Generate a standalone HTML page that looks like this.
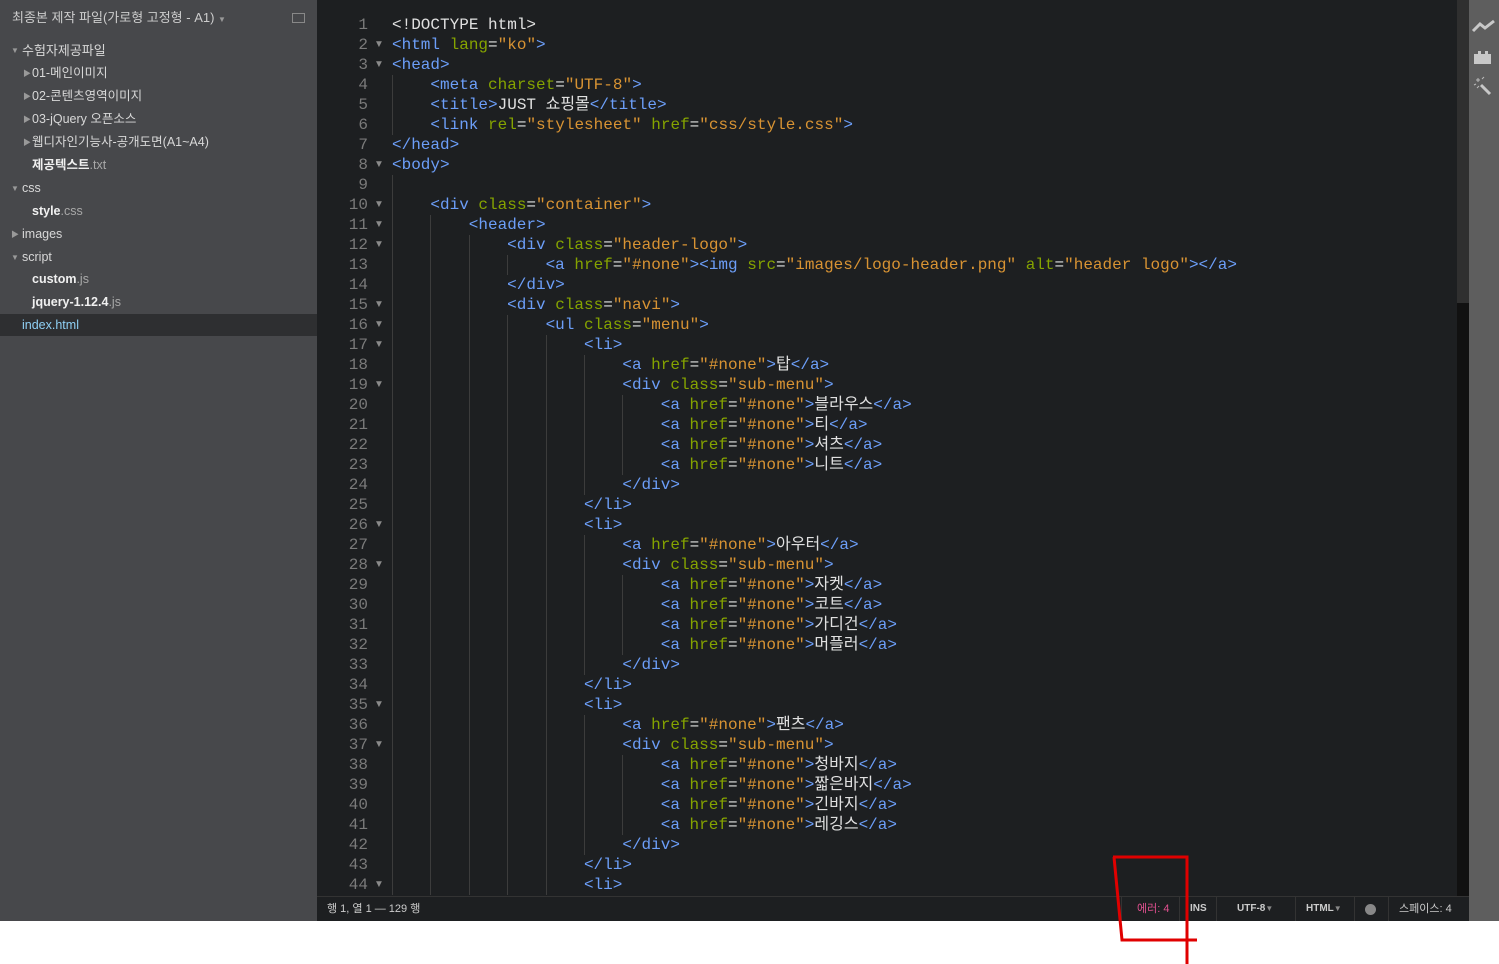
<!DOCTYPE html>
<html><head><meta charset="utf-8"><style>
*{margin:0;padding:0;box-sizing:border-box}
body{width:1499px;height:964px;background:#fff;position:relative;overflow:hidden;font-family:"Liberation Sans","Noto Sans CJK KR",sans-serif}
#side{position:absolute;left:0;top:0;width:317px;height:921px;background:#47484b;color:#d8d8d8;font-size:12.5px}
#side .r{position:absolute;left:0;width:317px;height:23px;line-height:23px;white-space:nowrap}
#side .ar{position:absolute;font-size:8px;color:#999}
#side b{color:#f0f0f0}
#side .ext{color:#a8a8a8}
#ed{position:absolute;left:317px;top:0;width:1140px;height:896px;background:#1d1f21;overflow:hidden}
#nums{position:absolute;left:0;top:15px;width:51px;text-align:right;color:#7a7a7a;font:16px/20px "Liberation Mono",monospace}
#folds{position:absolute;left:57px;top:15px;color:#8a8a8a;font:10px/20px "Liberation Sans",sans-serif}
#code{position:absolute;left:75px;top:15px;font:16px/20px "Liberation Mono","Noto Sans CJK KR",monospace;color:#e0e0e0}
#code div{height:20px;white-space:pre}
#code i{display:inline-block;width:38.4px;height:20px;border-left:1px solid #3c3c3c;vertical-align:top}
.t{color:#6c9ef8}.a{color:#85a300}.s{color:#d89333}
#sb1{position:absolute;left:1457px;top:0;width:12px;height:303px;background:#2f2f2f}
#sb2{position:absolute;left:1457px;top:303px;width:12px;height:593px;background:#111}
#tb{position:absolute;left:1469px;top:0;width:30px;height:921px;background:#5e5e5e}
#st{position:absolute;left:317px;top:896px;width:1152px;height:25px;background:#1d1f21;border-top:1px solid #333;color:#ccc;font-size:11px;line-height:24px}
#st span{position:absolute;top:0}
.sep{position:absolute;top:0;width:1px;height:24px;background:#333}
</style></head><body>
<div id="side">
<div class="r" style="top:6px;left:12px;font-size:13px;color:#ccc">최종본 제작 파일(가로형 고정형 - A1) <span style="font-size:8px;color:#999">▼</span></div>
<div style="position:absolute;left:292px;top:13px;width:13px;height:10px;border:1px solid #888"></div>
<div class="r" style="top:39px"><span class="ar" style="left:11px">▼</span><span style="position:absolute;left:22px;font-size:13px">수험자제공파일</span></div>
<div class="r" style="top:62px"><span class="ar" style="left:23px">▶</span><span style="position:absolute;left:32px">01-메인이미지</span></div>
<div class="r" style="top:85px"><span class="ar" style="left:23px">▶</span><span style="position:absolute;left:32px">02-콘텐츠영역이미지</span></div>
<div class="r" style="top:108px"><span class="ar" style="left:23px">▶</span><span style="position:absolute;left:32px">03-jQuery 오픈소스</span></div>
<div class="r" style="top:131px"><span class="ar" style="left:23px">▶</span><span style="position:absolute;left:32px">웹디자인기능사-공개도면(A1~A4)</span></div>
<div class="r" style="top:154px"><span style="position:absolute;left:32px"><b>제공텍스트</b><span class="ext">.txt</span></span></div>
<div class="r" style="top:177px"><span class="ar" style="left:11px">▼</span><span style="position:absolute;left:22px">css</span></div>
<div class="r" style="top:200px"><span style="position:absolute;left:32px"><b>style</b><span class="ext">.css</span></span></div>
<div class="r" style="top:223px"><span class="ar" style="left:11px">▶</span><span style="position:absolute;left:22px">images</span></div>
<div class="r" style="top:246px"><span class="ar" style="left:11px">▼</span><span style="position:absolute;left:22px">script</span></div>
<div class="r" style="top:268px"><span style="position:absolute;left:32px"><b>custom</b><span class="ext">.js</span></span></div>
<div class="r" style="top:291px"><span style="position:absolute;left:32px"><b>jquery-1.12.4</b><span class="ext">.js</span></span></div>
<div class="r" style="top:314px;height:22px;line-height:22px;background:#2e2f31"><span style="position:absolute;left:22px;color:#8fd0f5">index.html</span></div>
</div>
<div id="ed">
<div id="nums">1<br>2<br>3<br>4<br>5<br>6<br>7<br>8<br>9<br>10<br>11<br>12<br>13<br>14<br>15<br>16<br>17<br>18<br>19<br>20<br>21<br>22<br>23<br>24<br>25<br>26<br>27<br>28<br>29<br>30<br>31<br>32<br>33<br>34<br>35<br>36<br>37<br>38<br>39<br>40<br>41<br>42<br>43<br>44</div>
<div id="folds"><br>▼<br>▼<br><br><br><br><br>▼<br><br>▼<br>▼<br>▼<br><br><br>▼<br>▼<br>▼<br><br>▼<br><br><br><br><br><br><br>▼<br><br>▼<br><br><br><br><br><br><br>▼<br><br>▼<br><br><br><br><br><br><br>▼</div>
<div id="code">
<div>&lt;!DOCTYPE html&gt;</div>
<div><span class="t">&lt;html</span> <span class="a">lang</span>=<span class="s">"ko"</span><span class="t">&gt;</span></div>
<div><span class="t">&lt;head&gt;</span></div>
<div><i></i><span class="t">&lt;meta</span> <span class="a">charset</span>=<span class="s">"UTF-8"</span><span class="t">&gt;</span></div>
<div><i></i><span class="t">&lt;title&gt;</span>JUST 쇼핑몰<span class="t">&lt;/title&gt;</span></div>
<div><i></i><span class="t">&lt;link</span> <span class="a">rel</span>=<span class="s">"stylesheet"</span> <span class="a">href</span>=<span class="s">"css/style.css"</span><span class="t">&gt;</span></div>
<div><span class="t">&lt;/head&gt;</span></div>
<div><span class="t">&lt;body&gt;</span></div>
<div><i></i></div>
<div><i></i><span class="t">&lt;div</span> <span class="a">class</span>=<span class="s">"container"</span><span class="t">&gt;</span></div>
<div><i></i><i></i><span class="t">&lt;header&gt;</span></div>
<div><i></i><i></i><i></i><span class="t">&lt;div</span> <span class="a">class</span>=<span class="s">"header-logo"</span><span class="t">&gt;</span></div>
<div><i></i><i></i><i></i><i></i><span class="t">&lt;a</span> <span class="a">href</span>=<span class="s">"#none"</span><span class="t">&gt;&lt;img</span> <span class="a">src</span>=<span class="s">"images/logo-header.png"</span> <span class="a">alt</span>=<span class="s">"header logo"</span><span class="t">&gt;&lt;/a&gt;</span></div>
<div><i></i><i></i><i></i><span class="t">&lt;/div&gt;</span></div>
<div><i></i><i></i><i></i><span class="t">&lt;div</span> <span class="a">class</span>=<span class="s">"navi"</span><span class="t">&gt;</span></div>
<div><i></i><i></i><i></i><i></i><span class="t">&lt;ul</span> <span class="a">class</span>=<span class="s">"menu"</span><span class="t">&gt;</span></div>
<div><i></i><i></i><i></i><i></i><i></i><span class="t">&lt;li&gt;</span></div>
<div><i></i><i></i><i></i><i></i><i></i><i></i><span class="t">&lt;a</span> <span class="a">href</span>=<span class="s">"#none"</span><span class="t">&gt;</span>탑<span class="t">&lt;/a&gt;</span></div>
<div><i></i><i></i><i></i><i></i><i></i><i></i><span class="t">&lt;div</span> <span class="a">class</span>=<span class="s">"sub-menu"</span><span class="t">&gt;</span></div>
<div><i></i><i></i><i></i><i></i><i></i><i></i><i></i><span class="t">&lt;a</span> <span class="a">href</span>=<span class="s">"#none"</span><span class="t">&gt;</span>블라우스<span class="t">&lt;/a&gt;</span></div>
<div><i></i><i></i><i></i><i></i><i></i><i></i><i></i><span class="t">&lt;a</span> <span class="a">href</span>=<span class="s">"#none"</span><span class="t">&gt;</span>티<span class="t">&lt;/a&gt;</span></div>
<div><i></i><i></i><i></i><i></i><i></i><i></i><i></i><span class="t">&lt;a</span> <span class="a">href</span>=<span class="s">"#none"</span><span class="t">&gt;</span>셔츠<span class="t">&lt;/a&gt;</span></div>
<div><i></i><i></i><i></i><i></i><i></i><i></i><i></i><span class="t">&lt;a</span> <span class="a">href</span>=<span class="s">"#none"</span><span class="t">&gt;</span>니트<span class="t">&lt;/a&gt;</span></div>
<div><i></i><i></i><i></i><i></i><i></i><i></i><span class="t">&lt;/div&gt;</span></div>
<div><i></i><i></i><i></i><i></i><i></i><span class="t">&lt;/li&gt;</span></div>
<div><i></i><i></i><i></i><i></i><i></i><span class="t">&lt;li&gt;</span></div>
<div><i></i><i></i><i></i><i></i><i></i><i></i><span class="t">&lt;a</span> <span class="a">href</span>=<span class="s">"#none"</span><span class="t">&gt;</span>아우터<span class="t">&lt;/a&gt;</span></div>
<div><i></i><i></i><i></i><i></i><i></i><i></i><span class="t">&lt;div</span> <span class="a">class</span>=<span class="s">"sub-menu"</span><span class="t">&gt;</span></div>
<div><i></i><i></i><i></i><i></i><i></i><i></i><i></i><span class="t">&lt;a</span> <span class="a">href</span>=<span class="s">"#none"</span><span class="t">&gt;</span>자켓<span class="t">&lt;/a&gt;</span></div>
<div><i></i><i></i><i></i><i></i><i></i><i></i><i></i><span class="t">&lt;a</span> <span class="a">href</span>=<span class="s">"#none"</span><span class="t">&gt;</span>코트<span class="t">&lt;/a&gt;</span></div>
<div><i></i><i></i><i></i><i></i><i></i><i></i><i></i><span class="t">&lt;a</span> <span class="a">href</span>=<span class="s">"#none"</span><span class="t">&gt;</span>가디건<span class="t">&lt;/a&gt;</span></div>
<div><i></i><i></i><i></i><i></i><i></i><i></i><i></i><span class="t">&lt;a</span> <span class="a">href</span>=<span class="s">"#none"</span><span class="t">&gt;</span>머플러<span class="t">&lt;/a&gt;</span></div>
<div><i></i><i></i><i></i><i></i><i></i><i></i><span class="t">&lt;/div&gt;</span></div>
<div><i></i><i></i><i></i><i></i><i></i><span class="t">&lt;/li&gt;</span></div>
<div><i></i><i></i><i></i><i></i><i></i><span class="t">&lt;li&gt;</span></div>
<div><i></i><i></i><i></i><i></i><i></i><i></i><span class="t">&lt;a</span> <span class="a">href</span>=<span class="s">"#none"</span><span class="t">&gt;</span>팬츠<span class="t">&lt;/a&gt;</span></div>
<div><i></i><i></i><i></i><i></i><i></i><i></i><span class="t">&lt;div</span> <span class="a">class</span>=<span class="s">"sub-menu"</span><span class="t">&gt;</span></div>
<div><i></i><i></i><i></i><i></i><i></i><i></i><i></i><span class="t">&lt;a</span> <span class="a">href</span>=<span class="s">"#none"</span><span class="t">&gt;</span>청바지<span class="t">&lt;/a&gt;</span></div>
<div><i></i><i></i><i></i><i></i><i></i><i></i><i></i><span class="t">&lt;a</span> <span class="a">href</span>=<span class="s">"#none"</span><span class="t">&gt;</span>짧은바지<span class="t">&lt;/a&gt;</span></div>
<div><i></i><i></i><i></i><i></i><i></i><i></i><i></i><span class="t">&lt;a</span> <span class="a">href</span>=<span class="s">"#none"</span><span class="t">&gt;</span>긴바지<span class="t">&lt;/a&gt;</span></div>
<div><i></i><i></i><i></i><i></i><i></i><i></i><i></i><span class="t">&lt;a</span> <span class="a">href</span>=<span class="s">"#none"</span><span class="t">&gt;</span>레깅스<span class="t">&lt;/a&gt;</span></div>
<div><i></i><i></i><i></i><i></i><i></i><i></i><span class="t">&lt;/div&gt;</span></div>
<div><i></i><i></i><i></i><i></i><i></i><span class="t">&lt;/li&gt;</span></div>
<div><i></i><i></i><i></i><i></i><i></i><span class="t">&lt;li&gt;</span></div>
</div>
</div>
<div id="sb1"></div><div id="sb2"></div>
<div id="tb">
<svg width="30" height="110" style="position:absolute;left:0;top:0">
<path d="M4 31 L11 24 L16 28 L25 21" stroke="#c8c8c8" stroke-width="3" fill="none"/>
<path d="M5 54 h4 v-3 h3 v3 h4 v-3 h3 v3 h3 v10 h-17z" fill="#c8c8c8"/>
<path d="M12 85 L21 94" stroke="#c8c8c8" stroke-width="3"/>
<path d="M9 78 v4 M7 80 h4 M13 79 l2 -2 M5 85 l2 -1 M10 86 l-2 2" stroke="#bbb" stroke-width="1"/>
</svg>
</div>
<div id="st">
<span style="left:10px">행 1, 열 1 — 129 행</span>
<div class="sep" style="left:804px"></div>
<span style="left:820px;color:#e0508f">에러: 4</span>
<div class="sep" style="left:862px"></div>
<span style="left:873px;font-weight:bold;font-size:10px">INS</span>
<div class="sep" style="left:899px"></div>
<span style="left:920px;font-weight:bold;font-size:10px">UTF-8 <span style="color:#888;font-size:8px">▼</span></span>
<div class="sep" style="left:978px"></div>
<span style="left:989px;font-weight:bold;font-size:10px">HTML <span style="color:#888;font-size:8px">▼</span></span>
<div class="sep" style="left:1037px"></div>
<div style="position:absolute;left:1048px;top:7px;width:11px;height:11px;border-radius:50%;background:#888"></div>
<div class="sep" style="left:1071px"></div>
<span style="left:1082px">스페이스: 4</span>
</div>
<svg width="1499" height="964" style="position:absolute;left:0;top:0;pointer-events:none">
<path d="M1113 857 L1187 857 L1187 964 M1114 857 L1122 940 L1197 940" stroke="#e00000" stroke-width="3" fill="none"/>
</svg>
</body></html>
